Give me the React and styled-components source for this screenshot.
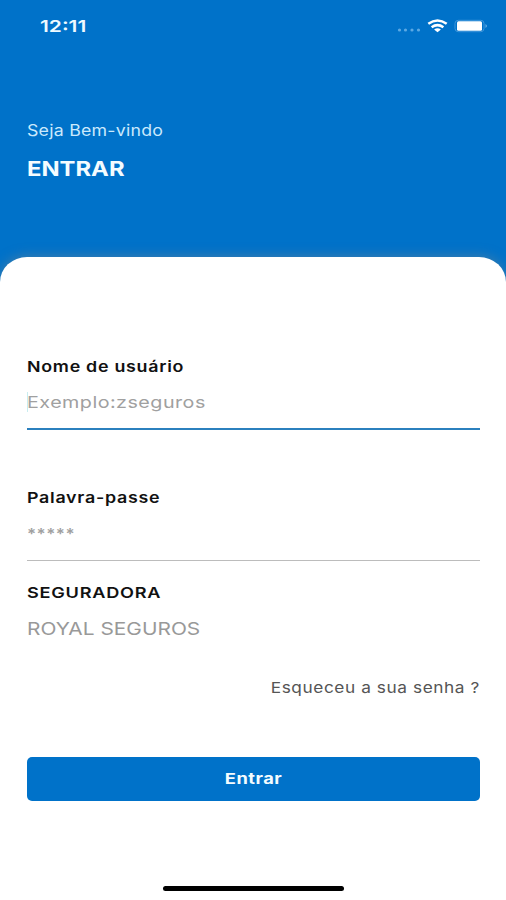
import React from "react";
import styled, { createGlobalStyle } from "styled-components";

const BLUE = "#0072c9";

const GlobalStyle = createGlobalStyle`
  *, *::before, *::after { box-sizing: border-box; }
  body { margin: 0; background: #fff; font-family: Inter, "Liberation Sans", sans-serif; }
`;

const Screen = styled.main`
  display: flex;
  flex-direction: column;
  width: 506px;
  height: 900px;
  overflow: hidden;
  background: ${BLUE};
`;

const StatusBar = styled.header`
  display: flex;
  justify-content: space-between;
  align-items: center;
  height: 52px;
  padding: 0 18px 0 40px;
`;

const StatusIcons = styled.div`
  display: flex;
  align-items: center;
`;

const Wide = styled.span`
  display: inline-block;
  white-space: nowrap;
  line-height: 20px;
  transform: scaleX(${(p) => p.$stretch || 1.2});
  transform-origin: ${(p) => p.$origin || "left"} center;
  font-size: ${(p) => p.$size}px;
  font-weight: ${(p) => p.$weight || 400};
  letter-spacing: ${(p) => p.$spacing || 0}px;
  color: ${(p) => p.$color || "#111"};
`;

const Welcome = styled.section`
  display: flex;
  flex-direction: column;
  align-items: flex-start;
  gap: 18px;
  height: 205px;
  padding: 69px 27px 0;
`;

const Sheet = styled.form`
  flex: 1;
  display: flex;
  flex-direction: column;
  padding: 100px 26px 9px 27px;
  background: #fff;
  border-radius: 27px 27px 0 0 / 25px 25px 0 0;
  box-shadow: 0 -1px 12px rgba(95, 130, 155, 0.65);
`;

const Field = styled.div`
  display: flex;
  flex-direction: column;
  align-items: flex-start;
  gap: ${(p) => p.$gap}px;
  height: ${(p) => p.$height}px;
  margin-bottom: ${(p) => p.$after || 0}px;
  border-bottom: ${(p) => p.$line || "none"};
`;

const Entry = styled.div`
  display: flex;
  align-items: center;
  height: 20px;
  box-shadow: ${(p) => (p.$active ? "inset 1px 0 0 #c9edf0" : "none")};
`;

const ForgotRow = styled.div`
  display: flex;
  justify-content: flex-end;
  height: 20px;
  margin-bottom: 59px;
`;

const Submit = styled.button`
  display: flex;
  align-items: center;
  justify-content: center;
  height: 44px;
  padding: 0;
  border: 0;
  border-radius: 5px;
  background: ${BLUE};
  font-family: inherit;
`;

const HomeIndicator = styled.div`
  width: 181px;
  height: 5px;
  margin: auto auto 0 136px;
  border-radius: 3px;
  background: #000;
`;

const StatusGlyphs = () => (
  <svg width="92" height="20" viewBox="396 16 92 20" aria-hidden="true">
    <g fill="#5ca9e4">
      <circle cx="399.5" cy="30" r="1.6" />
      <circle cx="405.5" cy="30" r="1.6" />
      <circle cx="412" cy="30" r="1.6" />
      <circle cx="418.5" cy="30" r="1.6" />
    </g>
    <g fill="none" stroke="#fff" strokeWidth="2.5">
      <path d="M428.3 23.8Q437.5 17.2 446.7 23.8" />
      <path d="M431.6 27.2Q437.5 23 443.4 27.2" />
    </g>
    <path d="M434.1 29.4Q437.5 27.2 440.9 29.4L437.5 32.2Z" fill="#fff" />
    <rect x="455" y="20.3" width="29" height="11.4" rx="3.2" fill="none" stroke="#3f97dc" strokeWidth="1" />
    <rect x="457" y="21.3" width="25" height="9.4" rx="1.5" fill="#fff" />
    <path d="M485.5 24Q488.4 26 485.5 28Z" fill="#69b0e6" />
  </svg>
);

export default function App() {
  return (
    <>
      <GlobalStyle />
      <Screen>
        <StatusBar>
          <Wide $size={16.5} $weight={600} $stretch={1.27} $color="#eefaff">12:11</Wide>
          <StatusIcons><StatusGlyphs /></StatusIcons>
        </StatusBar>
        <Welcome>
          <Wide $size={15.5} $spacing={0.2} $stretch={1.145} $color="#cbe9fc">Seja Bem-vindo</Wide>
          <Wide $size={20} $weight={700} $stretch={1.19} $color="#f4fcff">ENTRAR</Wide>
        </Welcome>
        <Sheet onSubmit={(e) => e.preventDefault()}>
          <Field $gap={15} $height={73} $after={58} $line="2px solid #2b80be">
            <Wide $size={15} $weight={600} $spacing={0.6} $stretch={1.19}>Nome de usuário</Wide>
            <Entry $active>
              <Wide $size={16.5} $spacing={0.4} $stretch={1.195} $color="#a0a0a0">Exemplo:zseguros</Wide>
            </Entry>
          </Field>
          <Field $gap={16} $height={73} $after={22} $line="1px solid #bcbcbc">
            <Wide $size={15} $weight={600} $spacing={0.6} $stretch={1.19}>Palavra-passe</Wide>
            <Entry><Wide $size={15} $weight={600} $spacing={0.4} $stretch={1.13} $color="#a0a0a0">*****</Wide></Entry>
          </Field>
          <Field $gap={16} $height={57} $after={38}>
            <Wide $size={15} $weight={600} $spacing={0.6} $stretch={1.21}>SEGURADORA</Wide>
            <Wide $size={17} $stretch={1.228} $color="#999">ROYAL SEGUROS</Wide>
          </Field>
          <ForgotRow>
            <Wide $size={15} $spacing={0.5} $stretch={1.15} $origin="right" $color="#555">Esqueceu a sua senha ?</Wide>
          </ForgotRow>
          <Submit type="submit">
            <Wide $size={15} $weight={700} $spacing={0.4} $stretch={1.22} $origin="center" $color="#f4fcff">Entrar</Wide>
          </Submit>
          <HomeIndicator />
        </Sheet>
      </Screen>
    </>
  );
}
